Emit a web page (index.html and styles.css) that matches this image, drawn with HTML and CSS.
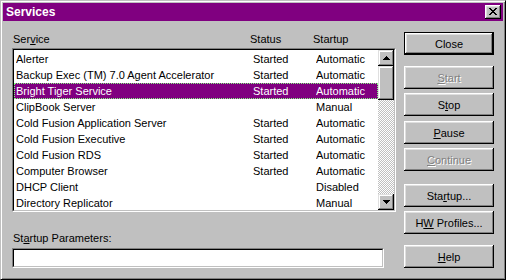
FILE: index.html
```html
<!DOCTYPE html>
<html lang="en">
<head>
  <meta charset="UTF-8" />
  <title>Services</title>
  <link rel="stylesheet" href="styles.css">
</head>
<body>

  <div class="window">
    <div class="titlebar">
      <span class="title">Services</span>
      <button class="tb-close">
        <svg width="8" height="7" viewBox="0 0 8 7" shape-rendering="crispEdges">
          <rect x="0" y="0" width="2" height="1"/><rect x="6" y="0" width="2" height="1"/>
          <rect x="1" y="1" width="2" height="1"/><rect x="5" y="1" width="2" height="1"/>
          <rect x="2" y="2" width="4" height="1"/>
          <rect x="3" y="3" width="2" height="1"/>
          <rect x="2" y="4" width="4" height="1"/>
          <rect x="1" y="5" width="2" height="1"/><rect x="5" y="5" width="2" height="1"/>
          <rect x="0" y="6" width="2" height="1"/><rect x="6" y="6" width="2" height="1"/>
        </svg>
      </button>
    </div>

    <div class="content">
      <div class="main">
        <div class="cols head">
          <span>Ser<u>v</u>ice</span><span>Status</span><span>Startup</span>
        </div>

        <div class="listbox">
          <div class="listbox-inner">
            <div class="rows">
              <div class="cols row"><span>Alerter</span><span>Started</span><span>Automatic</span></div>
              <div class="cols row"><span>Backup Exec (TM) 7.0 Agent Accelerator</span><span>Started</span><span>Automatic</span></div>
              <div class="cols row selected"><span>Bright Tiger Service</span><span>Started</span><span>Automatic</span></div>
              <div class="cols row"><span>ClipBook Server</span><span></span><span>Manual</span></div>
              <div class="cols row"><span>Cold Fusion Application Server</span><span>Started</span><span>Automatic</span></div>
              <div class="cols row"><span>Cold Fusion Executive</span><span>Started</span><span>Automatic</span></div>
              <div class="cols row"><span>Cold Fusion RDS</span><span>Started</span><span>Automatic</span></div>
              <div class="cols row"><span>Computer Browser</span><span>Started</span><span>Automatic</span></div>
              <div class="cols row"><span>DHCP Client</span><span></span><span>Disabled</span></div>
              <div class="cols row"><span>Directory Replicator</span><span></span><span>Manual</span></div>
            </div>
            <div class="scrollbar">
              <div class="sb-btn">
                <svg width="7" height="4" viewBox="0 0 7 4" shape-rendering="crispEdges"><path d="M3 0h1v1h1v1h1v1h1v1H0V3h1V2h1V1h1z"/></svg>
              </div>
              <div class="sb-track"><div class="sb-thumb"></div></div>
              <div class="sb-btn">
                <svg width="7" height="4" viewBox="0 0 7 4" shape-rendering="crispEdges"><path d="M0 0h7v1H6v1H5v1H4v1H3V3H2V2H1V1H0z"/></svg>
              </div>
            </div>
          </div>
        </div>

        <div class="param-label">St<u>a</u>rtup Parameters:</div>
        <div class="param-input"><div class="param-input-inner"></div></div>
      </div>

      <div class="buttons">
        <button class="btn default">Close</button>
        <button class="btn disabled gap-big"><u>S</u>tart</button>
        <button class="btn">S<u>t</u>op</button>
        <button class="btn gap-5"><u>P</u>ause</button>
        <button class="btn disabled"><u>C</u>ontinue</button>
        <button class="btn gap-group">Sta<u>r</u>tup...</button>
        <button class="btn">H<u>W</u> Profiles...</button>
        <button class="btn gap-big"><u>H</u>elp</button>
      </div>
    </div>
  </div>

</body>
</html>
```

FILE: styles.css
```css
body { margin: 0; font-family: "Liberation Sans", Arial, sans-serif; font-size: 11px; color: #000; }

.window {
  width: 506px; height: 280px; box-sizing: border-box; background: #c0c0c0;
  border: 1px solid; border-color: #c0c0c0 #000 #000 #c0c0c0;
  box-shadow: inset 1px 1px #fff, inset -1px -1px #808080;
  padding: 2px; display: flex; flex-direction: column;
}

.titlebar {
  height: 18px; background: #800080; color: #fff; flex: none;
  display: flex; align-items: center; justify-content: space-between;
  padding: 0 2px 0 3px;
}
.title { font-weight: bold; font-size: 12px; }
.tb-close {
  width: 16px; height: 14px; padding: 0; border: none; background: #c0c0c0;
  display: flex; align-items: center; justify-content: center;
  box-shadow: inset -1px -1px #000, inset 1px 1px #fff, inset -2px -2px #808080, inset 2px 2px #dfdfdf;
}
.tb-close svg { fill: #000; margin: 0 0 1px 0; }

.content { display: flex; flex: 1; }

.main { margin-left: 9px; padding-top: 10px; width: 384px; display: flex; flex-direction: column; }

.cols { display: grid; grid-template-columns: 237px 63px 1fr; white-space: nowrap; }
.head { height: 16px; line-height: 16px; padding-left: 1px; }

.listbox {
  margin-top: 1px; height: 164px; box-sizing: border-box;
  border: 1px solid; border-color: #808080 #fff #fff #808080;
}
.listbox-inner {
  height: 100%; box-sizing: border-box; background: #fff; display: flex;
  border: 1px solid; border-color: #000 #c0c0c0 #c0c0c0 #000;
}
.rows { flex: 1; overflow: hidden; padding-top: 1px; }
.row { height: 16px; line-height: 16px; padding-left: 2px; }
.row span { overflow: hidden; }
.row.selected { background: #800080; color: #fff; outline: 1px dotted #80ff80; outline-offset: -1px; }

.scrollbar { width: 16px; display: flex; flex-direction: column; }
.sb-btn, .sb-thumb {
  background: #c0c0c0;
  box-shadow: inset -1px -1px #000, inset 1px 1px #dfdfdf, inset -2px -2px #808080, inset 2px 2px #fff;
}
.sb-btn { height: 16px; flex: none; display: flex; align-items: center; justify-content: center; }
.sb-btn svg { fill: #000; }
.sb-track { flex: 1; background: repeating-conic-gradient(#c0c0c0 0 25%, #fff 0 50%) 0 0 / 2px 2px; }
.sb-thumb { height: 34px; }

.param-label { margin-top: 18px; height: 16px; line-height: 16px; padding-left: 1px; }
.param-input {
  margin-top: 2px; width: 372px; height: 20px; box-sizing: border-box;
  border: 1px solid; border-color: #808080 #fff #fff #808080;
}
.param-input-inner {
  height: 100%; box-sizing: border-box; background: #fff;
  border: 1px solid; border-color: #000 #c0c0c0 #c0c0c0 #000;
}

.buttons { margin-left: 8px; padding-top: 11px; width: 90px; display: flex; flex-direction: column; }
.btn {
  width: 90px; height: 23px; margin: 4px 0 0; padding: 0; border: none; background: #c0c0c0;
  font-family: inherit; font-size: 11px; color: #000;
  box-shadow: inset -1px -1px #000, inset 1px 1px #fff, inset -2px -2px #808080, inset 2px 2px #dfdfdf;
}
.btn.default {
  margin-top: 0;
  box-shadow: inset 0 0 0 1px #000, inset -2px -2px #000, inset 2px 2px #fff, inset -3px -3px #808080, inset 3px 3px #dfdfdf;
}
.btn.disabled { color: #808080; text-shadow: 1px 1px #fff; }
.btn.gap-big { margin-top: 11px; }
.btn.gap-5 { margin-top: 5px; }
.btn.gap-group { margin-top: 13px; }
```
